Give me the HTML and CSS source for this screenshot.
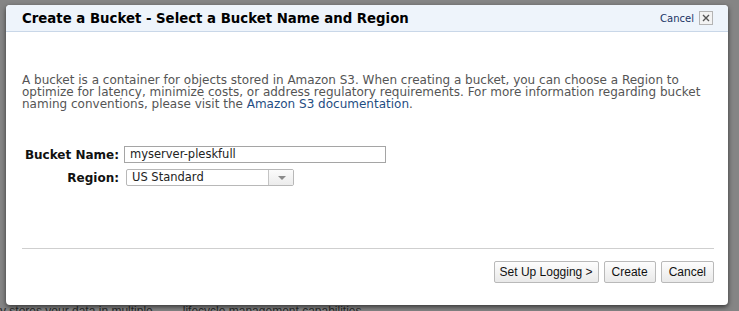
FILE: index.html
```html
<!DOCTYPE html>
<html lang="en">
<head>
    <meta charset="UTF-8">
    <title>Create a Bucket</title>
    <link rel="stylesheet" href="styles.css">
</head>
<body>
    <!-- Page behind the modal -->
    <div class="backdrop-page">
        <p class="backdrop-text"><span>y stores your data in multiple</span><span>lifecycle management capabilities,</span></p>
    </div>

    <!-- Modal -->
    <div class="overlay">
        <div class="dialog">
            <div class="dialog-header">
                <h1>Create a Bucket - Select a Bucket Name and Region</h1>
                <a href="#" class="header-cancel">Cancel</a>
                <span class="close-box">
                    <svg width="8" height="8" viewBox="0 0 8 8"><path d="M1 1 L7 7 M7 1 L1 7" stroke="#555" stroke-width="1.4"/></svg>
                </span>
            </div>

            <div class="dialog-body">
                <p class="intro">A bucket is a container for objects stored in Amazon S3. When creating a bucket, you can choose a Region to optimize for latency, minimize costs, or address regulatory requirements. For more information regarding bucket naming conventions, please visit the <a href="#">Amazon S3 documentation</a>.</p>

                <div class="form">
                    <label class="form-label">Bucket Name:</label>
                    <div class="text-field">myserver-pleskfull</div>
                    <label class="form-label">Region:</label>
                    <div class="select-field">
                        <span class="select-value">US Standard</span>
                        <span class="select-arrow"></span>
                    </div>
                </div>
            </div>

            <div class="dialog-footer">
                <button class="btn btn-logging">Set Up Logging &gt;</button>
                <button class="btn">Create</button>
                <button class="btn">Cancel</button>
            </div>
        </div>
    </div>
</body>
</html>
```

FILE: styles.css
```css
* {
    margin: 0;
    padding: 0;
    box-sizing: border-box;
}

body {
    width: 739px;
    height: 311px;
    overflow: hidden;
    background-color: #858585;
    font-family: "DejaVu Sans", Verdana, sans-serif;
    position: relative;
}

/* Page behind the modal */
.backdrop-page {
    height: 311px;
    display: flex;
    align-items: flex-end;
}

.backdrop-text {
    display: flex;
    gap: 30px;
    font-family: "Liberation Sans", Arial, sans-serif;
    font-size: 12px;
    line-height: 10px;
    color: #2a2a2a;
    margin-bottom: -5px;
}

/* Modal */
.overlay {
    position: absolute;
    top: 5px;
    left: 6px;
}

.dialog {
    width: 722px;
    height: 300px;
    background-color: #fff;
    border-radius: 4px;
    box-shadow: 0 2px 5px rgba(0, 0, 0, 0.6);
    overflow: hidden;
    display: flex;
    flex-direction: column;
}

.dialog-header {
    height: 27px;
    display: flex;
    align-items: center;
    padding: 0 15px 0 16px;
    background-color: #eef4fb;
    border-bottom: 1px solid #c9d7e8;
}

.dialog-header h1 {
    flex: 1;
    font-size: 13.3px;
    font-weight: bold;
    color: #000;
    padding-top: 1px;
}

.header-cancel {
    font-size: 10px;
    color: #1b3565;
    text-decoration: none;
    margin-right: 5px;
}

.close-box {
    width: 14px;
    height: 14px;
    border: 1px solid #b4b4b4;
    background-color: #f3f3f3;
    display: flex;
    align-items: center;
    justify-content: center;
}

.dialog-body {
    flex: 1;
    padding: 42px 14px 0 16px;
}

.intro {
    font-size: 12px;
    line-height: 12px;
    color: #555;
}

.intro a {
    display: inline-block;
    height: 12px;
    color: #1f4d82;
    text-decoration: none;
}

.form {
    display: grid;
    grid-template-columns: 97px auto;
    row-gap: 6px;
    column-gap: 5px;
    margin-top: 36px;
    align-items: center;
}

.form-label {
    font-size: 12px;
    font-weight: bold;
    color: #111;
    text-align: right;
}

.text-field {
    width: 262px;
    height: 17px;
    border: 1px solid #a5a5a5;
    font-size: 11.5px;
    line-height: 15px;
    padding-left: 5px;
    color: #222;
}

.select-field {
    width: 168px;
    height: 17px;
    margin-left: 2px;
    border: 1px solid #b8b8b8;
    border-radius: 2px;
    display: flex;
}

.select-value {
    flex: 1;
    font-size: 11.5px;
    line-height: 15px;
    padding-left: 5px;
    color: #222;
}

.select-arrow {
    width: 25px;
    border-left: 1px solid #c4c4c4;
    background: linear-gradient(#fbfbfb, #ececec);
    position: relative;
}

.select-arrow::after {
    content: "";
    position: absolute;
    top: 6px;
    left: 9px;
    border-left: 4px solid transparent;
    border-right: 4px solid transparent;
    border-top: 4px solid #8a8a8a;
}

.dialog-footer {
    margin: 0 14px 0 16px;
    padding: 12px 0 22px;
    border-top: 1px solid #cfcfcf;
    display: flex;
    justify-content: flex-end;
    gap: 5px;
}

.btn {
    height: 22px;
    padding: 0 7px;
    font-family: "Liberation Sans", Arial, sans-serif;
    font-size: 12px;
    color: #111;
    border: 1px solid #b9b9b9;
    border-radius: 2px;
    background: linear-gradient(#fdfdfd, #e9e9e9);
}

.btn-logging {
    padding: 0 5px;
}
```
